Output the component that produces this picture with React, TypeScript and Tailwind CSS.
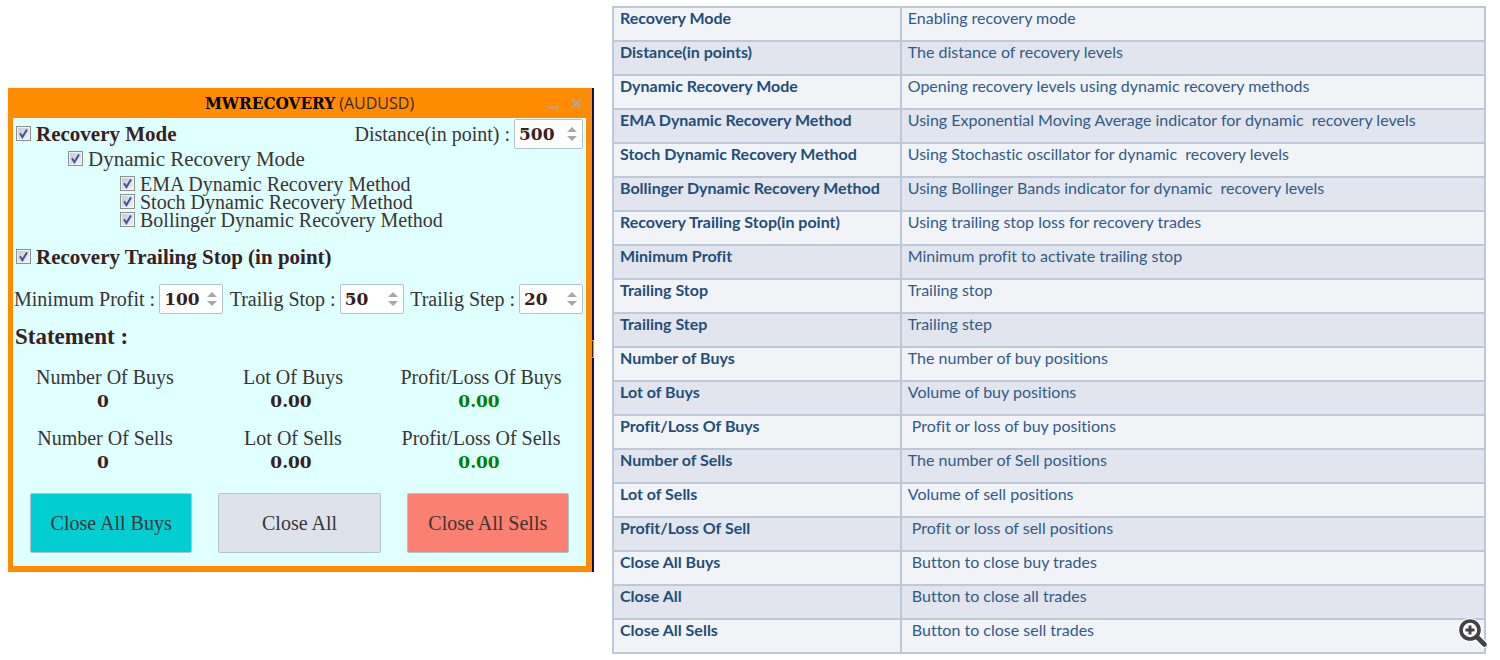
import { ReactNode, useId } from "react"

const parameters = [
  ["Recovery Mode", "Enabling recovery mode"],
  ["Distance(in points)", "The distance of recovery levels"],
  ["Dynamic Recovery Mode", "Opening recovery levels using dynamic recovery methods"],
  ["EMA Dynamic Recovery Method", "Using Exponential Moving Average indicator for dynamic  recovery levels"],
  ["Stoch Dynamic Recovery Method", "Using Stochastic oscillator for dynamic  recovery levels"],
  ["Bollinger Dynamic Recovery Method", "Using Bollinger Bands indicator for dynamic  recovery levels"],
  ["Recovery Trailing Stop(in point)", "Using trailing stop loss for recovery trades"],
  ["Minimum Profit", "Minimum profit to activate trailing stop"],
  ["Trailing Stop", "Trailing stop"],
  ["Trailing Step", "Trailing step"],
  ["Number of Buys", "The number of buy positions"],
  ["Lot of Buys", "Volume of buy positions"],
  ["Profit/Loss Of Buys", " Profit or loss of buy positions"],
  ["Number of Sells", "The number of Sell positions"],
  ["Lot of Sells", "Volume of sell positions"],
  ["Profit/Loss Of Sell", " Profit or loss of sell positions"],
  ["Close All Buys", " Button to close buy trades"],
  ["Close All", " Button to close all trades"],
  ["Close All Sells", " Button to close sell trades"],
]

const stats = [
  { label: "Number Of Buys", value: "0" },
  { label: "Lot Of Buys", value: "0.00" },
  { label: "Profit/Loss Of Buys", value: "0.00", profit: true },
  { label: "Number Of Sells", value: "0" },
  { label: "Lot Of Sells", value: "0.00" },
  { label: "Profit/Loss Of Sells", value: "0.00", profit: true },
]

function Check({ children, className }: { children: ReactNode; className: string }) {
  return (
    <label className={`flex items-center gap-[5px] whitespace-nowrap ${className}`}>
      <span className="grid size-[15px] shrink-0 -translate-y-px">
        <input
          type="checkbox"
          defaultChecked
          className="peer col-start-1 row-start-1 size-[15px] appearance-none border border-[#8e8f8f] bg-linear-to-br from-[#c3c8d0] to-[#f4f5f7] shadow-[inset_0_0_0_1px_#f4f4f4]"
        />
        <svg
          viewBox="0 0 15 15"
          className="pointer-events-none invisible col-start-1 row-start-1 size-[15px] peer-checked:visible"
        >
          <path d="M4 7.2 6.4 11 11 3.4" fill="none" stroke="#3f559b" strokeWidth="2" />
        </svg>
      </span>
      {children}
    </label>
  )
}

function NumberField({ label, value, className }: { label: string; value: number; className: string }) {
  const id = useId()
  return (
    <div className="flex items-center gap-1 whitespace-nowrap">
      <label htmlFor={id}>{label}</label>
      <div className={`flex h-[30px] items-center rounded-xs border border-[#b2c3cf] bg-white pr-[5px] pl-1 ${className}`}>
        <input
          id={id}
          type="text"
          inputMode="numeric"
          defaultValue={value}
          className="w-0 min-w-0 flex-1 font-['DejaVu_Serif'] text-[17px] leading-6 font-bold text-[#38201f] outline-none"
        />
        <div className="flex flex-col gap-1">
          <button type="button" aria-label={`Increase ${label}`} className="block">
            <svg viewBox="0 0 10 5" className="h-[5px] w-2.5">
              <path d="M0 5 5 0l5 5z" fill="#a9a9a9" />
            </svg>
          </button>
          <button type="button" aria-label={`Decrease ${label}`} className="block">
            <svg viewBox="0 0 10 5" className="h-[5px] w-2.5">
              <path d="M0 0l5 5 5-5z" fill="#a9a9a9" />
            </svg>
          </button>
        </div>
      </div>
    </div>
  )
}

function RecoveryPanel() {
  return (
    <section className="relative mt-[82px] border-r-2 border-[#0a0a6e] bg-[#ff8c00] pr-1.5 pb-1.5 pl-[5px] font-['Liberation_Serif',serif] text-xl leading-6 text-[#3b3434]">
      <header className="flex h-[30px] items-center">
        <h1 className="flex flex-1 items-center justify-center gap-1 pl-[58px]">
          <span className="font-['DejaVu_Serif_Condensed','DejaVu_Serif'] text-[17px] font-bold text-black">
            MWRECOVERY
          </span>
          <span className="font-['Open_Sans',sans-serif] text-base text-[#3b2a1a]">(AUDUSD)</span>
        </h1>
        <div className="flex gap-3 pr-1">
          <button type="button" aria-label="Minimize">
            <svg viewBox="0 0 11 11" className="size-[11px]">
              <path d="M0 9.5h11" stroke="#b9a58c" strokeWidth="2" />
            </svg>
          </button>
          <button type="button" aria-label="Close">
            <svg viewBox="0 0 11 11" className="size-[11px]">
              <path d="M1 1l9 9M10 1l-9 9" stroke="#b9a58c" strokeWidth="2" />
            </svg>
          </button>
        </div>
      </header>

      <div className="bg-[#e0ffff] pt-px pb-[13px]">
        <div className="flex items-center justify-between pr-[3px] pl-[3px]">
          <Check className="text-[21px] font-bold text-[#38201f]">Recovery Mode</Check>
          <NumberField label="Distance(in point) :" value={500} className="w-[69px]" />
        </div>
        <Check className="h-5 pl-[55px] text-[21px]">Dynamic Recovery Mode</Check>
        <div className="mt-1.5 pl-[107px] leading-[18px]">
          <Check className="h-[18px]">EMA Dynamic Recovery Method</Check>
          <Check className="h-[18px]">Stoch Dynamic Recovery Method</Check>
          <Check className="h-[18px]">Bollinger Dynamic Recovery Method</Check>
        </div>

        <Check className="mt-4 h-6 pl-[3px] text-[21px] font-bold text-[#38201f]">
          Recovery Trailing Stop (in point)
        </Check>
        <div className="mt-[15px] flex items-center justify-between pr-[3px] pl-px">
          <NumberField label="Minimum Profit :" value={100} className="w-16" />
          <NumberField label="Trailig Stop :" value={50} className="w-16" />
          <NumberField label="Trailig Step :" value={20} className="w-16" />
        </div>

        <h2 className="mt-2 pl-0.5 text-[23px] leading-[30px] font-bold text-[#38201f]">Statement :</h2>
        <dl className="mt-3 grid grid-cols-3 gap-x-[26px] gap-y-[13px] pr-6 pl-[11px] text-center whitespace-nowrap">
          {stats.map((stat) => (
            <div key={stat.label}>
              <dt className="leading-[26px]">{stat.label}</dt>
              <dd
                className={`pr-1 font-['DejaVu_Serif'] text-[17px] leading-[22px] font-bold ${
                  stat.profit ? "text-[#008000]" : "text-[#38201f]"
                }`}
              >
                {stat.value}
              </dd>
            </div>
          ))}
        </dl>

        <div className="mt-5 grid grid-cols-3 gap-[26px] px-[17px]">
          <button type="button" className="h-[60px] rounded-xs border border-[#b2c3cf] bg-[#00ced1]">
            Close All Buys
          </button>
          <button type="button" className="h-[60px] rounded-xs border border-[#b2c3cf] bg-[#dde2eb]">
            Close All
          </button>
          <button type="button" className="h-[60px] rounded-xs border border-[#b2c3cf] bg-[#fa8072]">
            Close All Sells
          </button>
        </div>
      </div>
      {/* chart marker poking out behind the window edge */}
      <span className="absolute top-[252px] -right-0.5 h-[18px] w-0.5 border-y border-r border-[#ff8c00] bg-[#3a2400]" />
    </section>
  )
}

function ParameterTable() {
  return (
    <div className="relative">
      <table className="w-full table-fixed border-collapse border-2 border-[#bdc8d8] font-['Lato',sans-serif] text-base leading-5 text-[#315b87] [font-variant-ligatures:none]">
        <colgroup>
          <col className="w-[33%]" />
          <col />
        </colgroup>
        <tbody>
          {parameters.map(([name, description]) => (
            <tr key={name} className="h-[34px] align-top odd:bg-[#f1f3f7] even:bg-[#e2e5ed]">
              <th scope="row" className="border-2 border-[#bdc8d8] px-1.5 text-left font-bold whitespace-nowrap text-[#1f4e79]">
                {name}
              </th>
              <td className="border-2 border-[#bdc8d8] px-1.5 whitespace-pre">{description}</td>
            </tr>
          ))}
        </tbody>
      </table>
      <button type="button" aria-label="Zoom in" className="absolute -right-0.5 bottom-1.5">
        <svg viewBox="0 0 30 30" className="size-[30px]" fill="none" strokeLinecap="round">
          <circle cx="12" cy="12" r="9" fill="#fff" stroke="#fff" strokeWidth="6" />
          <path d="M19 19l7.5 7.5" stroke="#fff" strokeWidth="7" />
          <circle cx="12" cy="12" r="9" stroke="#434343" strokeWidth="3.6" />
          <path d="M19.5 19.5l7 7" stroke="#434343" strokeWidth="4.6" />
          <path d="M12 7.5v9M7.5 12h9" stroke="#434343" strokeWidth="3" strokeLinecap="butt" />
        </svg>
      </button>
    </div>
  )
}

export default function App() {
  return (
    <main className="grid grid-cols-[minmax(0,586fr)_minmax(0,874fr)] items-start gap-[18px] bg-white pt-1.5 pr-3.5 pb-1.5 pl-2">
      <RecoveryPanel />
      <ParameterTable />
    </main>
  )
}
